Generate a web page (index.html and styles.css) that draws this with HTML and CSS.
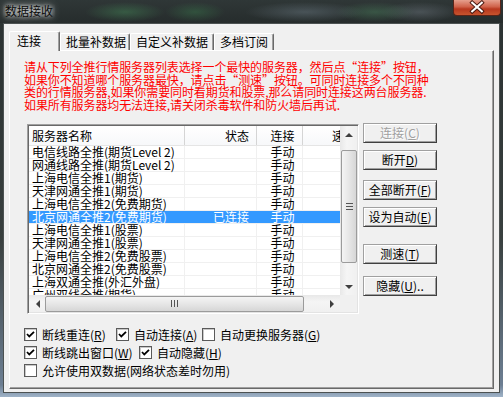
FILE: index.html
```html
<!DOCTYPE html>
<html lang="zh-CN">
<head>
  <meta charset="UTF-8">
  <title>数据接收</title>
  <link rel="stylesheet" href="styles.css">
</head>
<body>
  <div class="window">
    <div class="titlebar">
      <div class="title">数据接收</div>
      <div class="close">
        <svg width="48" height="16" viewBox="0 0 48 16">
          <path d="M19 3.5 L29 12.5 M29 3.5 L19 12.5" stroke="#4a1a12" stroke-width="4.2" stroke-linecap="square"/>
          <path d="M19 3.5 L29 12.5 M29 3.5 L19 12.5" stroke="#fff" stroke-width="2.2" stroke-linecap="square"/>
        </svg>
      </div>
    </div>

    <div class="client">
      <div class="tabs">
        <div class="tab active">连接</div>
        <div class="tab">批量补数据</div>
        <div class="tab">自定义补数据</div>
        <div class="tab">多档订阅</div>
      </div>

      <div class="panel">
        <p class="notice">
          请从下列全推行情服务器列表选择一个最快的服务器，然后点“连接”按钮，<br>
          如果你不知道哪个服务器最快，请点击“测速”按钮。可同时连接多个不同种<br>
          类的行情服务器,如果你需要同时看期货和股票,那么请同时连接这两台服务器.<br>
          如果所有服务器均无法连接,请关闭杀毒软件和防火墙后再试.
        </p>

        <div class="middle">
          <div class="list">
            <div class="list-main">
              <div class="list-head">
                <div class="col c-name">服务器名称</div>
                <div class="col c-state">状态</div>
                <div class="col c-mode">连接</div>
                <div class="col c-speed">速度</div>
              </div>
              <div class="list-body">
                <div class="row"><div class="col c-name">电信线路全推(期货Level 2)</div><div class="col c-state"></div><div class="col c-mode">手动</div><div class="col c-speed"></div></div>
                <div class="row"><div class="col c-name">网通线路全推(期货Level 2)</div><div class="col c-state"></div><div class="col c-mode">手动</div><div class="col c-speed"></div></div>
                <div class="row"><div class="col c-name">上海电信全推1(期货)</div><div class="col c-state"></div><div class="col c-mode">手动</div><div class="col c-speed"></div></div>
                <div class="row"><div class="col c-name">天津网通全推1(期货)</div><div class="col c-state"></div><div class="col c-mode">手动</div><div class="col c-speed"></div></div>
                <div class="row"><div class="col c-name">上海电信全推2(免费期货)</div><div class="col c-state"></div><div class="col c-mode">手动</div><div class="col c-speed"></div></div>
                <div class="row selected"><div class="col c-name">北京网通全推2(免费期货)</div><div class="col c-state">已连接</div><div class="col c-mode">手动</div><div class="col c-speed"></div></div>
                <div class="row"><div class="col c-name">上海电信全推1(股票)</div><div class="col c-state"></div><div class="col c-mode">手动</div><div class="col c-speed"></div></div>
                <div class="row"><div class="col c-name">天津网通全推1(股票)</div><div class="col c-state"></div><div class="col c-mode">手动</div><div class="col c-speed"></div></div>
                <div class="row"><div class="col c-name">上海电信全推2(免费股票)</div><div class="col c-state"></div><div class="col c-mode">手动</div><div class="col c-speed"></div></div>
                <div class="row"><div class="col c-name">北京网通全推2(免费股票)</div><div class="col c-state"></div><div class="col c-mode">手动</div><div class="col c-speed"></div></div>
                <div class="row"><div class="col c-name">上海双通全推(外汇外盘)</div><div class="col c-state"></div><div class="col c-mode">手动</div><div class="col c-speed"></div></div>
                <div class="row"><div class="col c-name">广州双线全推(期货)</div><div class="col c-state"></div><div class="col c-mode">手动</div><div class="col c-speed"></div></div>
              </div>
              <div class="hscroll">
                <div class="arrow"><span class="tri tri-left"></span></div>
                <div class="track">
                  <div class="thumb hthumb"><span class="grip"></span></div>
                </div>
                <div class="arrow"><span class="tri tri-right"></span></div>
              </div>
            </div>
            <div class="vscroll">
              <div class="arrow"><span class="tri tri-up"></span></div>
              <div class="track vtrack">
                <div class="thumb vthumb"><span class="grip"></span></div>
              </div>
              <div class="arrow"><span class="tri tri-down"></span></div>
              <div class="corner"></div>
            </div>
          </div>

          <div class="buttons">
            <button class="btn disabled">连接(<u>C</u>)</button>
            <button class="btn b2">断开<u>D</u>)</button>
            <button class="btn b3">全部断开(<u>F</u>)</button>
            <button class="btn b4">设为自动(<u>E</u>)</button>
            <button class="btn b5">测速(<u>T</u>)</button>
            <button class="btn b6">隐藏(<u>U</u>)..</button>
          </div>
        </div>

        <div class="options">
          <div class="opt-row">
            <label class="opt w92"><span class="box checked"></span>断线重连(<u>R</u>)</label>
            <label class="opt w86"><span class="box checked"></span>自动连接(<u>A</u>)</label>
            <label class="opt"><span class="box"></span>自动更换服务器(<u>G</u>)</label>
          </div>
          <div class="opt-row">
            <label class="opt w115"><span class="box checked"></span>断线跳出窗口(<u>W</u>)</label>
            <label class="opt"><span class="box checked"></span>自动隐藏(<u>H</u>)</label>
          </div>
          <div class="opt-row">
            <label class="opt"><span class="box"></span>允许使用双数据(网络状态差时勿用)</label>
          </div>
        </div>
      </div>
    </div>
  </div>
</body>
</html>
```

FILE: styles.css
```css
* {
  box-sizing: border-box;
}

html, body {
  margin: 0;
  padding: 0;
}

body {
  width: 503px;
  height: 397px;
  overflow: hidden;
  font-family: "Noto Sans CJK SC", "Liberation Sans", sans-serif;
  font-size: 12px;
  color: #000;
  background: linear-gradient(180deg, #2a3131 0%, #39403f 60%, #6d7f93 97%, #9fb3c8 100%);
}

.window {
  display: flex;
  flex-direction: column;
  height: 397px;
}

/* glass title bar */
.titlebar {
  height: 23px;
  display: flex;
  justify-content: space-between;
  align-items: flex-start;
  background:
    radial-gradient(ellipse 40px 10px at 125px 12px, rgba(70,140,90,0.45), transparent),
    radial-gradient(ellipse 30px 10px at 195px 12px, rgba(60,130,80,0.4), transparent),
    radial-gradient(ellipse 60px 10px at 305px 12px, rgba(110,125,135,0.45), transparent),
    radial-gradient(ellipse 40px 10px at 375px 12px, rgba(80,140,100,0.4), transparent),
    radial-gradient(ellipse 40px 10px at 420px 12px, rgba(120,130,140,0.4), transparent),
    linear-gradient(180deg, #2f3737, #262c2c);
}

.title {
  margin: 4px 0 0 3px;
  padding: 0 2px;
  line-height: 13px;
  font-size: 12px;
  color: #0a0a0a;
  background: radial-gradient(ellipse at center, rgba(200,205,205,0.45), rgba(120,128,128,0.15) 70%, transparent);
  text-shadow: 0 0 8px rgba(255,255,255,0.9), 0 0 4px rgba(255,255,255,0.7);
}

.close {
  width: 48px;
  height: 16px;
  margin-right: 2px;
  border: 1px solid #5a2418;
  border-top: none;
  border-radius: 0 0 4px 4px;
  background: linear-gradient(180deg, #e6a08e 0%, #d0624a 45%, #b8381f 60%, #c8542e 100%);
  display: flex;
  justify-content: center;
}

.close svg {
  display: block;
  margin-top: -1px;
}

/* dialog client */
.client {
  height: 370px;
  margin: 0 3px;
  border: 1px solid #4c5252;
  background: #f0f0f0;
  padding: 7px 5px 0 5px;
}

.tabs {
  display: flex;
  align-items: flex-end;
  height: 19px;
  position: relative;
  z-index: 1;
}

.tab {
  height: 17px;
  line-height: 16px;
  padding-left: 5px;
  border-top: 1px solid #fff;
  border-left: 1px solid #fff;
  border-right: 1px solid #696969;
  box-shadow: inset -1px 0 #a0a0a0;
  border-radius: 2px 2px 0 0;
  white-space: nowrap;
}

.tab:nth-child(2) { width: 70px; }
.tab:nth-child(3) { width: 84px; }
.tab:nth-child(4) { width: 60px; }

.tab.active {
  width: 51px;
  height: 20px;
  margin-bottom: -1px;
  padding-left: 7px;
  line-height: 18px;
  background: #f0f0f0;
}

.panel {
  height: 339px;
  border-top: 1px solid #fff;
  border-left: 1px solid #fff;
  border-right: 1px solid #696969;
  border-bottom: 1px solid #696969;
  box-shadow: inset -1px -1px #a0a0a0;
  padding: 10px 0 0 14px;
}

.notice {
  margin: 0;
  color: #ff0000;
  line-height: 12.5px;
  white-space: nowrap;
  letter-spacing: -0.1px;
}

.middle {
  display: flex;
  align-items: flex-start;
  margin-top: 13px;
}

/* list view */
.list {
  display: flex;
  margin-left: 3px;
  width: 332px;
  border-top: 1px solid #a0a0a0;
  border-left: 1px solid #a0a0a0;
  border-right: 1px solid #fff;
  border-bottom: 1px solid #fff;
  box-shadow: inset 1px 1px #696969, inset -1px -1px #e3e3e3;
  padding: 1px;
}

.list-main {
  width: 311px;
  overflow: hidden;
  background: #fff;
}

.list-head, .row {
  display: flex;
  width: 340px;
}

.list-head {
  height: 20px;
  line-height: 19px;
  background: linear-gradient(180deg, #fff, #f7f8fa);
  border-bottom: 1px solid #e5e5e5;
}

.list-head .col {
  border-right: 1px solid #d5d5d5;
}

.col {
  flex: none;
  white-space: nowrap;
  overflow-x: clip;
  overflow-y: visible;
}

.c-name { width: 156px; padding-left: 3px; }
.c-state { width: 72px; text-align: right; padding-right: 7px; }
.c-mode { width: 46px; text-align: center; padding-left: 6px; }
.c-speed { width: 66px; padding-left: 29px; }

.list-body {
  height: 149px;
  overflow: hidden;
}

.row {
  height: 13px;
  line-height: 13px;
  border-bottom: 1px solid #f0f0f0;
}

.row .col {
  border-right: 1px solid #f0f0f0;
  line-height: 12px;
}

.row.selected {
  background: #3399ff;
  color: #fff;
}

.row.selected .col {
  border-right-color: #3399ff;
}

/* scrollbars */
.hscroll {
  display: flex;
  height: 17px;
  background: linear-gradient(180deg, #e8e8e8, #f5f5f5 40%, #f0f0f0);
}

.vscroll {
  width: 17px;
  display: flex;
  flex-direction: column;
  background: linear-gradient(90deg, #e8e8e8, #f5f5f5 40%, #f0f0f0);
}

.arrow {
  width: 17px;
  height: 17px;
  flex: none;
  display: flex;
  align-items: center;
  justify-content: center;
}

.track {
  flex: 1;
  display: flex;
  align-items: center;
}

.vtrack {
  flex-direction: column;
  align-items: stretch;
  padding-top: 7px;
}

.thumb {
  border: 1px solid #9b9b9b;
  border-radius: 2px;
  display: flex;
  align-items: center;
  justify-content: center;
}

.hthumb {
  width: 259px;
  height: 16px;
  margin-left: -1px;
  background: linear-gradient(180deg, #f4f4f4, #e6e6e6 50%, #d6d6d6);
}

.vthumb {
  height: 113px;
  margin: 0 0 0 1px;
  width: 16px;
  background: linear-gradient(90deg, #f4f4f4, #e6e6e6 50%, #d6d6d6);
}

.hthumb .grip {
  width: 7px;
  height: 7px;
  background: repeating-linear-gradient(90deg, #555 0 1px, transparent 1px 3px);
}

.vthumb .grip {
  width: 7px;
  height: 7px;
  background: repeating-linear-gradient(180deg, #555 0 1px, transparent 1px 3px);
}

.tri {
  width: 0;
  height: 0;
  border: 4px solid transparent;
}

.tri-up { border-bottom: 4px solid #404040; border-top-width: 0; }
.tri-down { border-top: 4px solid #404040; border-bottom-width: 0; }
.tri-left { border-right: 4px solid #404040; border-left-width: 0; }
.tri-right { border-left: 4px solid #404040; border-right-width: 0; }

.corner {
  height: 17px;
  background: #f0f0f0;
}

/* buttons */
.buttons {
  display: flex;
  flex-direction: column;
  margin: -1px 0 0 4px;
}

.btn {
  width: 74px;
  height: 20px;
  padding: 0;
  font-family: inherit;
  font-size: 12px;
  line-height: 16px;
  color: #000;
  background: #f0f0f0;
  border-top: 1px solid #a0a0a0;
  border-left: 1px solid #a0a0a0;
  border-right: 1px solid #404040;
  border-bottom: 1px solid #404040;
  box-shadow: inset 1px 1px #fff, inset -1px -1px #a0a0a0;
  white-space: nowrap;
}

.btn u {
  text-underline-offset: 1px;
}

.btn.disabled {
  color: #a0a0a0;
  text-shadow: 1px 1px #fff;
}

.b2 { margin-top: 7px; }
.b3 { margin-top: 10px; }
.b4 { margin-top: 7px; }
.b5 { margin-top: 17px; }
.b6 { margin-top: 12px; }

/* check boxes */
.options {
  margin-top: 11px;
}

.opt-row {
  display: flex;
  height: 18px;
  align-items: center;
}

.opt {
  display: flex;
  align-items: center;
  white-space: nowrap;
  line-height: 13px;
}

.w92 { width: 92px; }
.w86 { width: 86px; }
.w115 { width: 115px; }

.box {
  width: 13px;
  height: 13px;
  margin-right: 5px;
  border: 1px solid #5a5a5a;
  background: #fff;
  box-shadow: inset 1px 1px #c8c8c8;
  flex: none;
}

.box.checked {
  background: #fff url("data:image/svg+xml;utf8,<svg xmlns='http://www.w3.org/2000/svg' width='11' height='11'><polyline points='2,5 4.3,7.5 9,2.8' fill='none' stroke='black' stroke-width='1.8'/></svg>") no-repeat center;
}
```
